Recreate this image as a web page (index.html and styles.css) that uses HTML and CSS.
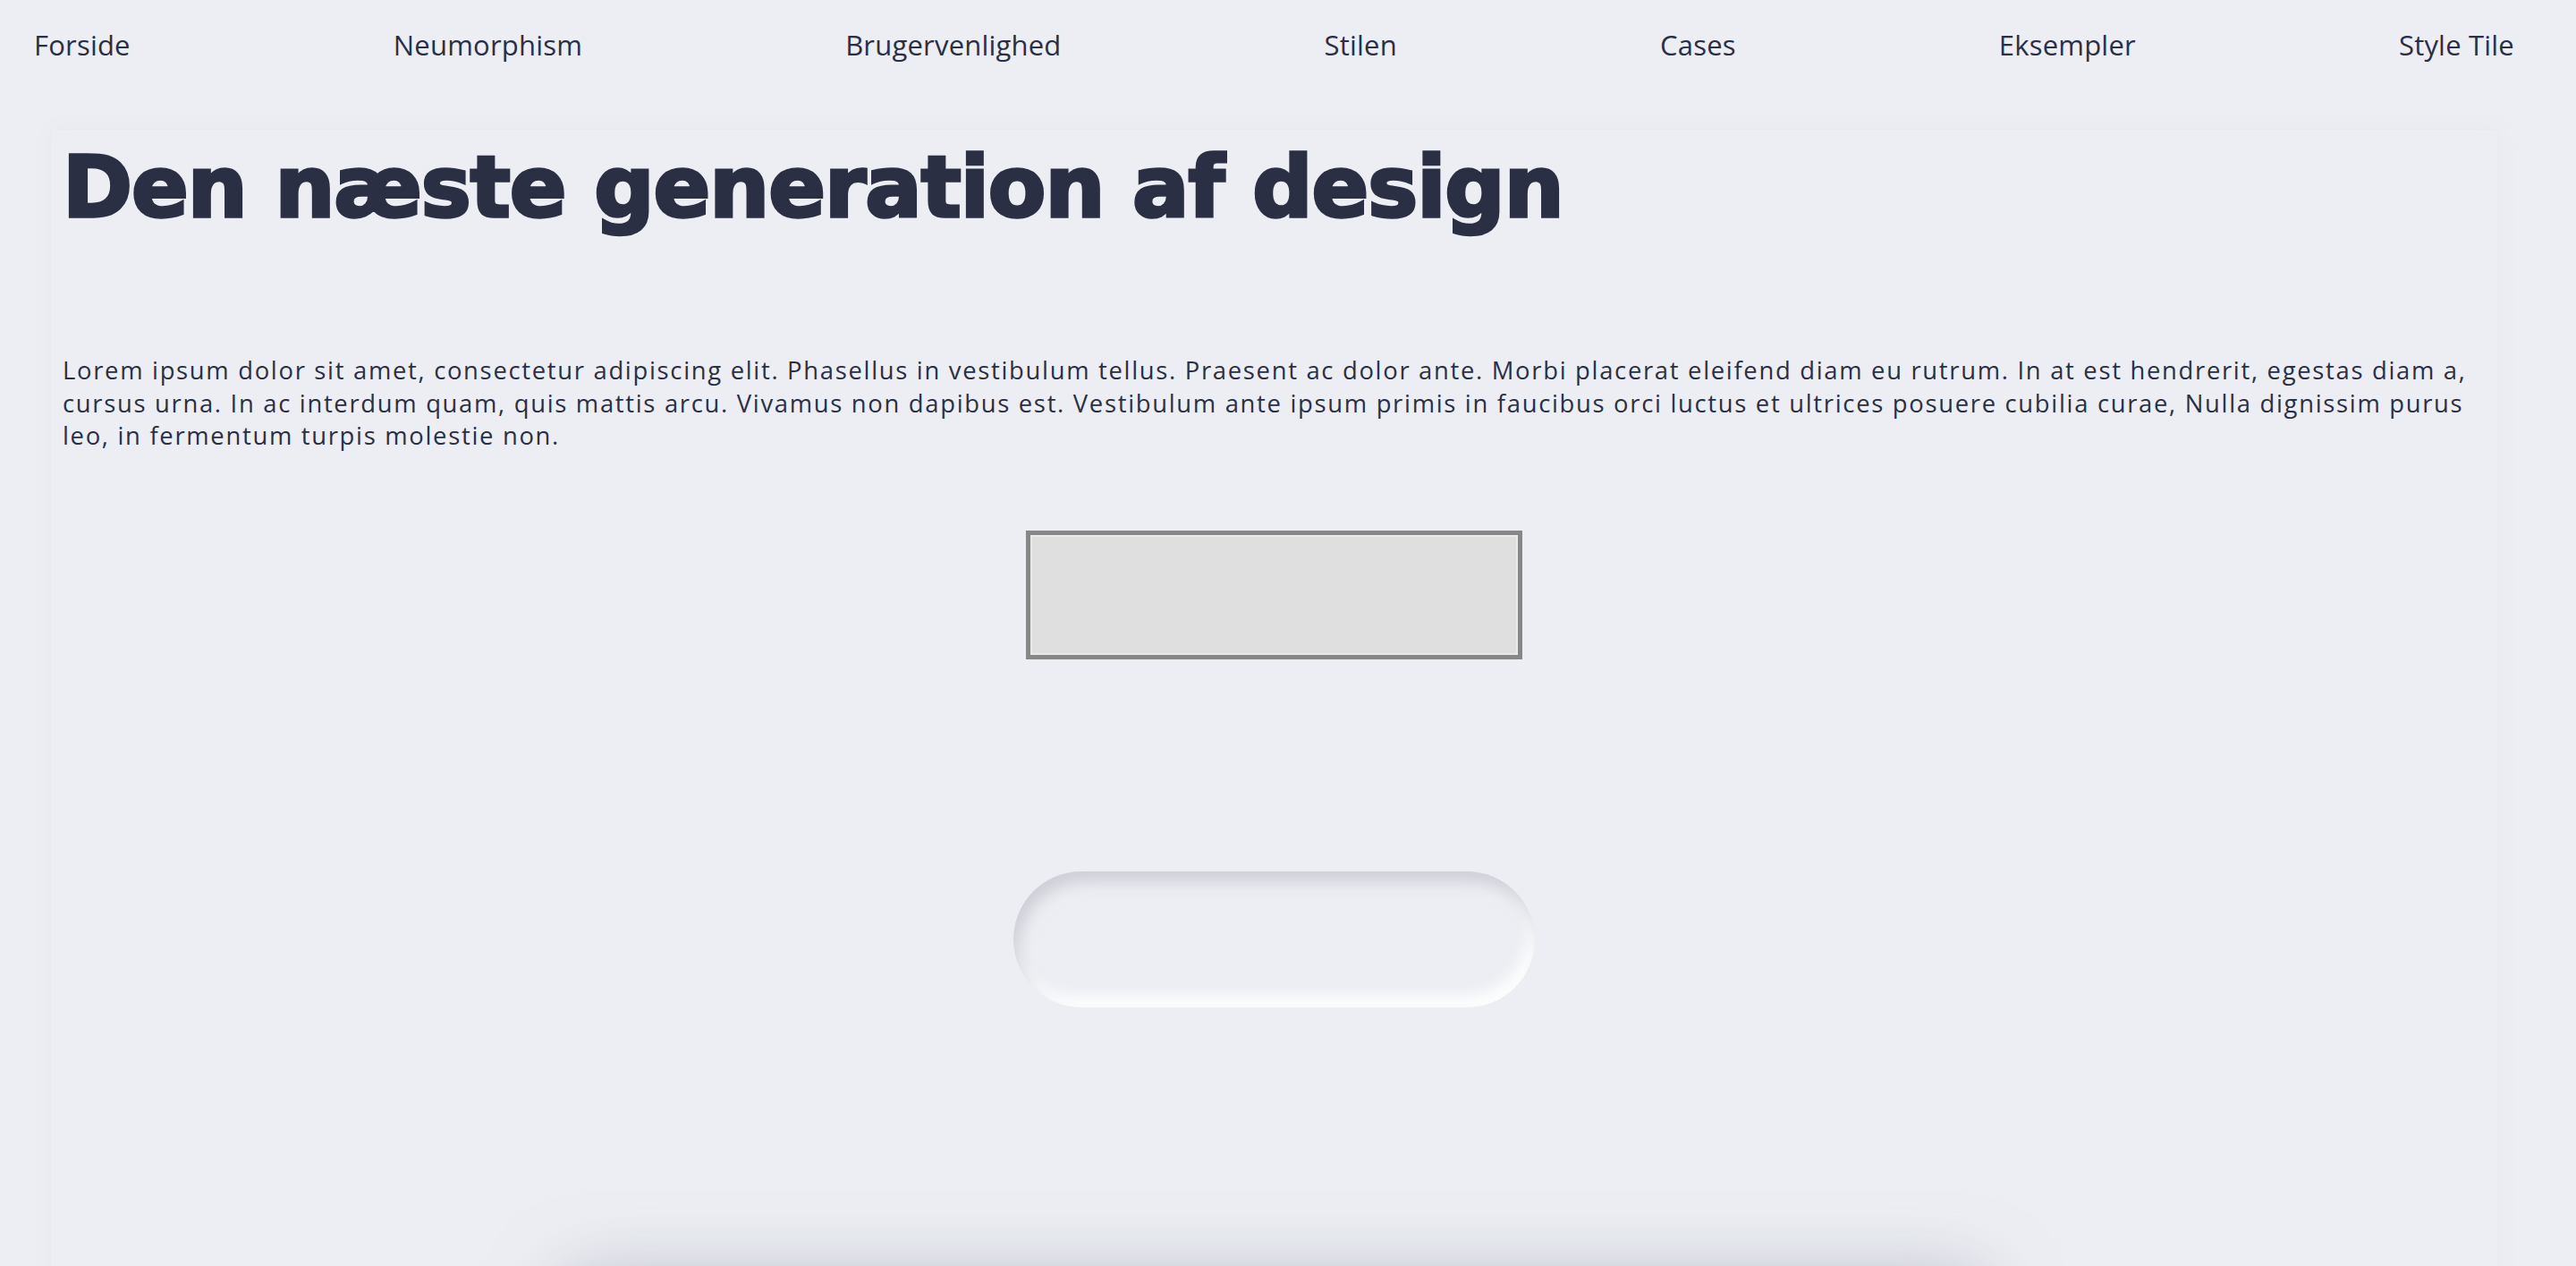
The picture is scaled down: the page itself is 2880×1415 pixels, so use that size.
FILE: index.html
```html
<!DOCTYPE html>
<html lang="da">
<head>
<meta charset="utf-8">
<title>Neumorphism</title>
<link rel="stylesheet" href="styles.css">
</head>
<body>
<nav class="topnav">
  <a href="#">Forside</a>
  <a href="#">Neumorphism</a>
  <a href="#">Brugervenlighed</a>
  <a href="#">Stilen</a>
  <a href="#">Cases</a>
  <a href="#">Eksempler</a>
  <a href="#">Style Tile</a>
</nav>
<main class="page">
  <h1 class="title">Den næste generation af design</h1>
  <p class="intro">Lorem ipsum dolor sit amet, consectetur adipiscing elit. Phasellus in vestibulum tellus. Praesent ac dolor ante. Morbi placerat eleifend diam eu rutrum. In at est hendrerit, egestas diam a, cursus urna. In ac interdum quam, quis mattis arcu. Vivamus non dapibus est. Vestibulum ante ipsum primis in faucibus orci luctus et ultrices posuere cubilia curae, Nulla dignissim purus leo, in fermentum turpis molestie non.</p>
  <div class="demo">
    <button class="plain-btn" type="button"></button>
    <div class="inset-pill"></div>
    <div class="raised-card"></div>
  </div>
</main>
</body>
</html>
```

FILE: styles.css
```css
html, body {
  margin: 0;
  padding: 0;
  background: #eceef3;
  overflow: hidden;
  height: 1415px;
}

body {
  font-family: "Open Sans", "Noto Sans", sans-serif;
  color: #2a2f45;
}

.topnav {
  display: flex;
  justify-content: space-between;
  align-items: center;
  height: 100px;
  padding: 0 69px 0 38px;
  box-sizing: border-box;
}

.topnav a {
  color: #2a2f45;
  text-decoration: none;
  font-size: 31px;
  letter-spacing: 0.2px;
}

.page {
  margin: 45px 88px 0 57px;
  padding: 17px 13px 0;
  box-shadow: 0 0 24px rgba(120, 125, 145, 0.05);
}

.title {
  margin: 0;
  font-family: "DejaVu Sans", "Liberation Sans", sans-serif;
  font-weight: 700;
  font-size: 94px;
  line-height: 96px;
  letter-spacing: -1px;
  color: #2b2f44;
  -webkit-text-stroke: 3.5px #2b2f44;
}

.intro {
  margin: 138px 0 0;
  font-size: 27.4px;
  line-height: 36.7px;
  letter-spacing: 1.7px;
}

.demo {
  display: flex;
  flex-direction: column;
  align-items: center;
  padding-top: 87px;
}

.plain-btn {
  width: 555px;
  height: 144px;
  background: #dfdfdf;
  border: 5px solid #878787;
  box-shadow: inset 0 0 0 2px #e9e9e9;
  padding: 0;
  margin: 0;
}

.inset-pill {
  margin-top: 237px;
  width: 583px;
  height: 152px;
  border-radius: 76px;
  background: #eceef3;
  box-shadow: inset 6px 12px 16px rgba(185, 183, 195, 0.55),
              inset -6px -12px 16px rgba(255, 255, 255, 0.95);
}

.raised-card {
  margin-top: 300px;
  width: 1600px;
  height: 600px;
  border-radius: 40px;
  background: #eceef3;
  box-shadow: 0 0 80px rgba(150, 152, 168, 0.55);
}
```
